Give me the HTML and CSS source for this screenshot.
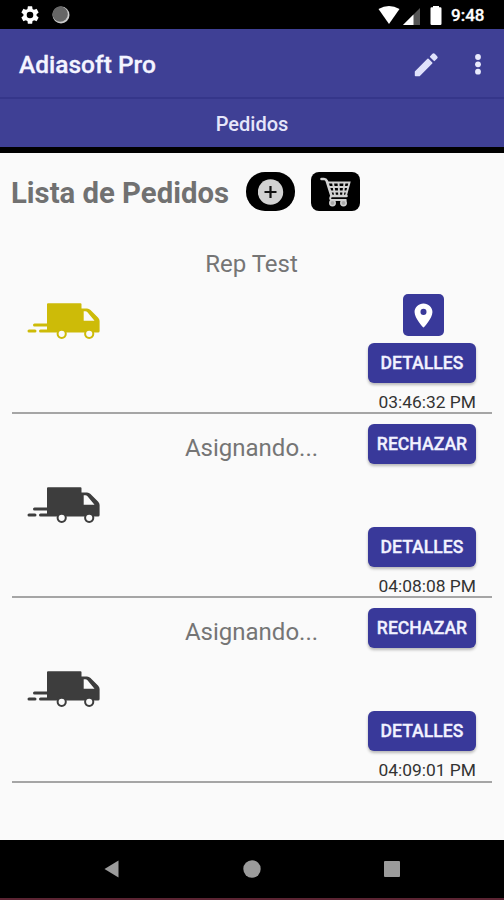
FILE: index.html
```html
<!DOCTYPE html>
<html lang="es">
<head>
<meta charset="utf-8">
<title>Adiasoft Pro</title>
<link rel="stylesheet" href="styles.css">
</head>
<body>
<svg width="0" height="0" class="defs">
  <symbol id="truck" viewBox="0 0 74 38">
    <path fill="currentColor" fill-rule="evenodd" d="M21 1.300h32.500q1 0 1 1V6.500H60q2 0 3.500 1.500l7.500 7.500q1.600 1.500 1.600 3.500V29q0 1.500-1.500 1.500H13.500a1.500 1.500 0 0 1 0-3H20V24.500H7.500a1.500 1.500 0 0 1 0-3H20V2.300q0-1 1-1zM56.700 9.300v9.400H67.500L60.500 10.300q-1-1-2-1zM2 27.500h6a1.500 1.500 0 0 1 0 3H2a1.500 1.500 0 0 1 0-3z"/>
    <g fill="#fafafa" stroke="currentColor" stroke-width="2"><circle cx="34.700" cy="31.800" r="4.100"/><circle cx="62.200" cy="31.800" r="4.100"/></g>
  </symbol>
</svg>
<div class="screen">
  <header class="status">
    <svg class="gear" viewBox="0 0 24 24" width="22" height="22"><path fill="#fff" d="M19.140 12.940c.040-.3.060-.61.060-.94s-.020-.64-.070-.94l2.030-1.580a.49.490 0 0 0 .12-.61l-1.920-3.320a.488.488 0 0 0-.59-.22l-2.390.96c-.5-.38-1.030-.7-1.620-.94l-.36-2.540a.484.484 0 0 0-.48-.41h-3.840c-.24 0-.43.170-.47.410l-.36 2.540c-.59.240-1.130.57-1.620.94l-2.390-.96c-.22-.08-.47 0-.59.220L2.740 8.870c-.12.210-.08.470.12.610l2.030 1.580c-.05.300-.09.630-.09.940s.02.640.07.940l-2.030 1.580a.49.490 0 0 0-.12.610l1.920 3.320c.12.220.37.290.59.220l2.390-.96c.5.380 1.030.7 1.620.94l.36 2.540c.05.240.24.410.48.410h3.840c.24 0 .44-.17.470-.41l.36-2.540c.59-.24 1.130-.56 1.620-.94l2.390.96c.22.080.47 0 .59-.22l1.920-3.320c.12-.22.070-.47-.12-.61zM12 15.600A3.600 3.600 0 1 1 12 8.400a3.600 3.600 0 0 1 0 7.200z"/></svg>
    <svg class="sync" width="18" height="18" viewBox="0 0 18 18"><circle cx="9" cy="9" r="8.500" fill="#ccc"/><circle cx="8.200" cy="8.100" r="7.700" fill="#666"/></svg>
    <svg class="signals" width="66" height="22" viewBox="0 0 66 22"><path fill="#fff" d="M.5 5Q11-1 21.500 5L11 20z"/><path fill="#555" d="M42 4v17H25z"/><path fill="#fff" d="M35.500 10.500V21H25z"/><path fill="#fff" d="M52.500 4.500q0-1.200 1.200-1.200H55V2h6v1.300h1.300q1.200 0 1.200 1.200v15.300q0 1.200-1.200 1.200h-8.600q-1.200 0-1.200-1.200z"/></svg>
    <span class="clock">9:48</span>
  </header>
  <div class="appbar">
    <h1>Adiasoft Pro</h1>
    <svg class="pencil" width="26" height="26" viewBox="0 0 26 26"><g fill="#e0e2fb" stroke="#e0e2fb" stroke-width="1.600" stroke-linejoin="round"><path d="M2.600 19.700 15 7.300l3.700 3.700L6.300 23.400H2.600z"/><path d="M17.700 4.700 20 2.400q.6-.6 1.200 0l2.400 2.400q.6.600 0 1.200l-2.300 2.300z"/></g></svg>
    <svg class="more" width="8" height="24" viewBox="0 0 8 24"><g fill="#e9eafd"><circle cx="4" cy="4" r="2.900"/><circle cx="4" cy="11.300" r="2.900"/><circle cx="4" cy="18.700" r="2.900"/></g></svg>
  </div>
  <nav class="tab">Pedidos</nav>
  <main>
    <div class="heading">
      <h2>Lista de Pedidos</h2>
      <button class="add" aria-label="Agregar"><svg width="26" height="26" viewBox="0 0 26 26"><circle cx="12.500" cy="13" r="12.700" fill="#d2d2d2"/><path d="M12.500 7v12M6.500 13h12" stroke="#111" stroke-width="2.200"/></svg></button>
      <button class="cart" aria-label="Carrito"><svg width="32" height="30" viewBox="0 0 32 30"><g fill="none" stroke="#d2d2d2"><path stroke-width="2.600" stroke-linecap="round" d="M1.500 2h2.500q2 0 2.800 2l4.700 15h15"/><path stroke-width="1.900" d="M7.500 5.500h22l-3.500 13M9 10h19.500M10.500 14.500h17M13 5.500l2 13M18.500 5.500l.7 13M24.500 5.500l-1.500 13M11 19q-2 4 1 4H26.500"/></g><g fill="#aaa" stroke="#d2d2d2" stroke-width="1.500"><circle cx="12.500" cy="26" r="2.700"/><circle cx="23.500" cy="26" r="2.700"/></g></svg></button>
    </div>
    <section class="order">
      <svg class="truck yellow" width="74" height="38"><use href="#truck"/></svg>
      <h3>Rep Test</h3>
      <div class="actions">
        <button class="pin" aria-label="Mapa"><svg width="29" height="29" viewBox="0 0 24 24"><path fill="#fff" fill-rule="evenodd" d="M12 2C8 2 4.600 5.130 4.600 9c0 5.250 7.400 13 7.400 13s7.400-7.750 7.400-13c0-3.870-3.400-7-7.400-7zm0 9.500a2.500 2.500 0 1 1 0-5 2.500 2.500 0 0 1 0 5z"/></svg></button>
        <button class="btn details">DETALLES</button>
        <time>03:46:32 PM</time>
      </div>
    </section>
    <section class="order">
      <svg class="truck" width="74" height="38"><use href="#truck"/></svg>
      <h3>Asignando...</h3>
      <div class="actions">
        <button class="btn reject">RECHAZAR</button>
        <button class="btn details">DETALLES</button>
        <time>04:08:08 PM</time>
      </div>
    </section>
    <section class="order">
      <svg class="truck" width="74" height="38"><use href="#truck"/></svg>
      <h3>Asignando...</h3>
      <div class="actions">
        <button class="btn reject">RECHAZAR</button>
        <button class="btn details">DETALLES</button>
        <time>04:09:01 PM</time>
      </div>
    </section>
  </main>
  <footer>
    <svg width="16" height="18" viewBox="0 0 16 18"><path fill="#9b9b9b" d="M14.500.5v17L.5 9z"/></svg>
    <svg width="18" height="18" viewBox="0 0 18 18"><circle cx="9" cy="9" r="8.700" fill="#9b9b9b"/></svg>
    <svg width="16" height="18" viewBox="0 0 16 18"><rect y="1" width="16" height="16" rx="1" fill="#9b9b9b"/></svg>
  </footer>
</div>
</body>
</html>
```
FILE: styles.css
```css
* { box-sizing: border-box; }
body { margin: 0; font-family: Roboto, "Liberation Sans", sans-serif; }
h1, h2, h3 { margin: 0; }
button { border: 0; padding: 0; font-family: inherit; }
svg { display: block; flex: none; }
.defs { display: none; }
.screen { width: 504px; height: 900px; display: flex; flex-direction: column; background: #fafafa; overflow: hidden; }
.status { height: 29px; flex: none; background: #000; display: flex; align-items: center; padding: 0 20px 0 19px; }
.sync { margin-left: 11px; }
.signals { margin-left: auto; }
.clock { width: 33px; margin-left: 7px; color: #fff; font-size: 17px; font-weight: 500; white-space: nowrap; padding-top: 1px; -webkit-text-stroke: .3px #fff; }
.appbar { height: 70px; flex: none; background: #3f4095; border-bottom: 2px solid #35368a; display: flex; align-items: center; padding: 3px 22px 0 19px; }
h1 { color: #f4f4ff; font-size: 24.500px; font-weight: 500; line-height: 30px; margin-right: auto; white-space: nowrap; -webkit-text-stroke: .3px #f4f4ff; }
.pencil { margin-right: 35px; }
.tab { height: 54px; flex: none; background: #3f4095; border-bottom: 6px solid #000; color: #e6e6fa; font-size: 20px; font-weight: 500; line-height: 50px; text-align: center; }
main { flex: 1; padding: 0 12px; }
.heading { height: 77px; padding-top: 19px; display: flex; align-items: flex-start; }
h2 { width: 234px; color: #717171; font-size: 29.300px; font-weight: 700; line-height: 43px; white-space: nowrap; text-indent: -1px; }
.add, .cart { width: 49px; height: 39px; background: #000; display: grid; place-items: center; }
.add { border-radius: 19px; }
.cart { margin-left: 16px; border-radius: 8px; }
.order { height: 184.200px; border-bottom: 2px solid #a5a5a5; display: grid; grid-template-columns: 108px 1fr 108px; padding: 0 16px 0 15px; }
.truck { margin-top: 72px; color: #3d3d3d; }
.truck.yellow { color: #cdbb08; }
h3 { color: #757575; font-size: 24px; font-weight: 400; line-height: 30px; margin-top: 19px; text-align: center; }
.actions { display: grid; grid-template-rows: 53px 59.600px 40px 28.400px; justify-items: end; align-items: end; color: #333; }
.btn { width: 108px; height: 40px; border-radius: 6px; background: #39399a; color: #f2f2ff; font-size: 17.600px; font-weight: 500; line-height: 41px; box-shadow: 0 2px 3px #0004; -webkit-text-stroke: .3px #f2f2ff; }
.reject { align-self: start; margin-top: 9.500px; }
.details { grid-row: 3; }
.pin { grid-row: 1 / 3; width: 41px; height: 42px; border-radius: 5px; background: #39399a; margin: 0 32px 6.600px 0; display: grid; place-items: center; }
time { grid-row: 4; font-size: 17.400px; line-height: 17px; white-space: nowrap; }
footer { height: 60px; flex: none; background: #000; border-bottom: 2px solid #5c2433; display: flex; align-items: center; justify-content: space-between; padding: 0 104px; }
```
